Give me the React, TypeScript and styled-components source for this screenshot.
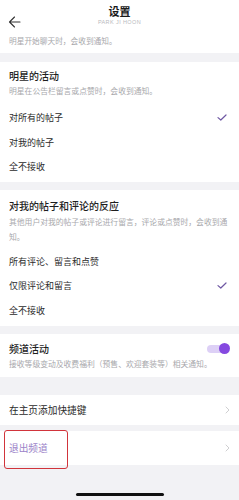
import React from "react";
import styled, { createGlobalStyle } from "styled-components";

const Global = createGlobalStyle`
  html, body { margin: 0; padding: 0; background: #f2f2f5; }
  body { font-family: "Noto Sans CJK SC", "Noto Sans", sans-serif; -webkit-font-smoothing: antialiased; }
  * { box-sizing: border-box; }
`;

const Page = styled.div`
  width: 239px;
  min-height: 500px;
  display: flex;
  flex-direction: column;
  background: #f2f2f5;
`;

const Header = styled.div`
  height: 32px;
  background: #fff;
  display: grid;
  grid-template-columns: 30px 1fr 30px;
  align-items: start;
`;

const BackButton = styled.div`
  padding: 9px 0 0 8px;
  height: 32px;
`;

const TitleBlock = styled.div`
  display: flex;
  flex-direction: column;
  align-items: center;
  padding-top: 4px;
`;

const Title = styled.div`
  font-size: 11px;
  line-height: 14px;
  font-weight: 700;
  color: #1a1a1a;
`;

const SubTitle = styled.div`
  font-family: "Liberation Sans", Arial, sans-serif;
  font-size: 5.5px;
  line-height: 9px;
  letter-spacing: 0.4px;
  color: #b9b9bd;
`;

const Card = styled.div<{ $gap?: number }>`
  background: #fff;
  margin-top: ${(p) => p.$gap ?? 0}px;
`;

const Section = styled(Card)<{ $pt?: number; $pb?: number }>`
  padding: ${(p) => p.$pt ?? 8}px 9px ${(p) => p.$pb ?? 3}px 9px;
`;

const TopDesc = styled.div`
  padding: 2px 9px 5px;
  font-size: 7.7px;
  line-height: 14px;
  color: #a8a8ac;
`;

const SectionTitleRow = styled.div`
  display: flex;
  align-items: center;
  justify-content: space-between;
`;

const SectionTitle = styled.div`
  font-size: 10px;
  line-height: 14px;
  font-weight: 500;
  color: #1e1e1e;
`;

const Desc = styled.div<{ $mt?: number }>`
  margin-top: ${(p) => p.$mt ?? 1}px;
  font-size: 7.8px;
  line-height: 14.4px;
  color: #a8a8ac;
  white-space: nowrap;
`;

const Options = styled.div<{ $mt?: number }>`
  margin-top: ${(p) => p.$mt ?? 7}px;
  display: flex;
  flex-direction: column;
`;

const OptionRow = styled.div<{ $h?: number }>`
  height: ${(p) => p.$h ?? 25}px;
  display: flex;
  align-items: center;
  justify-content: space-between;
  font-size: 9px;
  color: #2b2b2b;
`;

const CheckWrap = styled.div`
  width: 12px;
  display: flex;
  justify-content: center;
  margin-right: 2px;
`;

const Toggle = styled.div`
  position: relative;
  width: 23px;
  height: 12px;
  display: flex;
  align-items: center;
`;

const Track = styled.div`
  width: 20px;
  height: 8px;
  border-radius: 4px;
  background: #ddd0f6;
`;

const Knob = styled.div`
  position: absolute;
  right: 0;
  top: 0.5px;
  width: 11px;
  height: 11px;
  border-radius: 50%;
  background: #8549e0;
`;

const LinkRow = styled.div<{ $h: number; $gap: number; $color?: string }>`
  position: relative;
  background: #fff;
  margin-top: ${(p) => p.$gap}px;
  height: ${(p) => p.$h}px;
  padding: 0 9px;
  display: flex;
  align-items: center;
  justify-content: space-between;
  font-size: 9.7px;
  color: ${(p) => p.$color ?? "#2b2b2b"};
`;

const Highlight = styled.div`
  position: absolute;
  left: 4px;
  top: -1px;
  width: 64px;
  height: 39px;
  border: 1.5px solid #d1343b;
  border-radius: 3px;
  pointer-events: none;
`;

const Footer = styled.div`
  flex: 1;
  display: flex;
  justify-content: center;
  padding-top: 28px;
  min-height: 33px;
`;

const HomeBar = styled.div`
  width: 88px;
  height: 3px;
  border-radius: 2px;
  background: #111;
`;

const BackIcon = () => (
  <svg width="13" height="12" viewBox="0 0 13 12">
    <path d="M12 6H1.5M6.5 1L1.5 6l5 5" fill="none" stroke="#333" strokeWidth="1.1" strokeLinecap="round" strokeLinejoin="round" />
  </svg>
);

const Check = () => (
  <svg width="10" height="7" viewBox="0 0 10 7">
    <path d="M1 3.6L3.8 6 9 1" fill="none" stroke="#6f58a3" strokeWidth="1.2" strokeLinecap="round" strokeLinejoin="round" />
  </svg>
);

const Chevron = () => (
  <svg width="5" height="8" viewBox="0 0 5 8">
    <path d="M1 1l3 3-3 3" fill="none" stroke="#c9c9cc" strokeWidth="0.9" strokeLinecap="round" strokeLinejoin="round" />
  </svg>
);

type Opt = { label: string; checked?: boolean };

const OptionList = ({ items, mt }: { items: Opt[]; mt?: number }) => (
  <Options $mt={mt}>
    {items.map((o) => (
      <OptionRow key={o.label} $h={24.6}>
        <span>{o.label}</span>
        {o.checked && (
          <CheckWrap>
            <Check />
          </CheckWrap>
        )}
      </OptionRow>
    ))}
  </Options>
);

export default function App() {
  return (
    <>
      <Global />
      <Page>
        <Header>
          <BackButton>
            <BackIcon />
          </BackButton>
          <TitleBlock>
            <Title>设置</Title>
            <SubTitle>PARK JI HOON</SubTitle>
          </TitleBlock>
          <div />
        </Header>
        <Card>
          <TopDesc>明星开始聊天时，会收到通知。</TopDesc>
        </Card>

        <Section $gap={9} $pt={7} $pb={3}>
          <SectionTitle>明星的活动</SectionTitle>
          <Desc>明星在公告栏留言或点赞时，会收到通知。</Desc>
          <OptionList
            mt={7}
            items={[{ label: "对所有的帖子", checked: true }, { label: "对我的帖子" }, { label: "全不接收" }]}
          />
        </Section>

        <Section $gap={8} $pt={9} $pb={3}>
          <SectionTitle>对我的帖子和评论的反应</SectionTitle>
          <Desc $mt={2}>
            其他用户对我的帖子或评论进行留言，评论或点赞时，会收到通
            <br />
            知。
          </Desc>
          <OptionList
            mt={5}
            items={[{ label: "所有评论、留言和点赞" }, { label: "仅限评论和留言", checked: true }, { label: "全不接收" }]}
          />
        </Section>

        <Section $gap={8} $pt={8} $pb={6}>
          <SectionTitleRow>
            <SectionTitle>频道活动</SectionTitle>
            <Toggle>
              <Track />
              <Knob />
            </Toggle>
          </SectionTitleRow>
          <Desc $mt={1}>接收等级变动及收费福利（预售、欢迎套装等）相关通知。</Desc>
        </Section>

        <LinkRow $h={30} $gap={18}>
          <span>在主页添加快捷键</span>
          <Chevron />
        </LinkRow>
        <LinkRow $h={34} $gap={6} $color="#9b82c8">
          <span>退出频道</span>
          <Chevron />
          <Highlight />
        </LinkRow>

        <Footer>
          <HomeBar />
        </Footer>
      </Page>
    </>
  );
}
